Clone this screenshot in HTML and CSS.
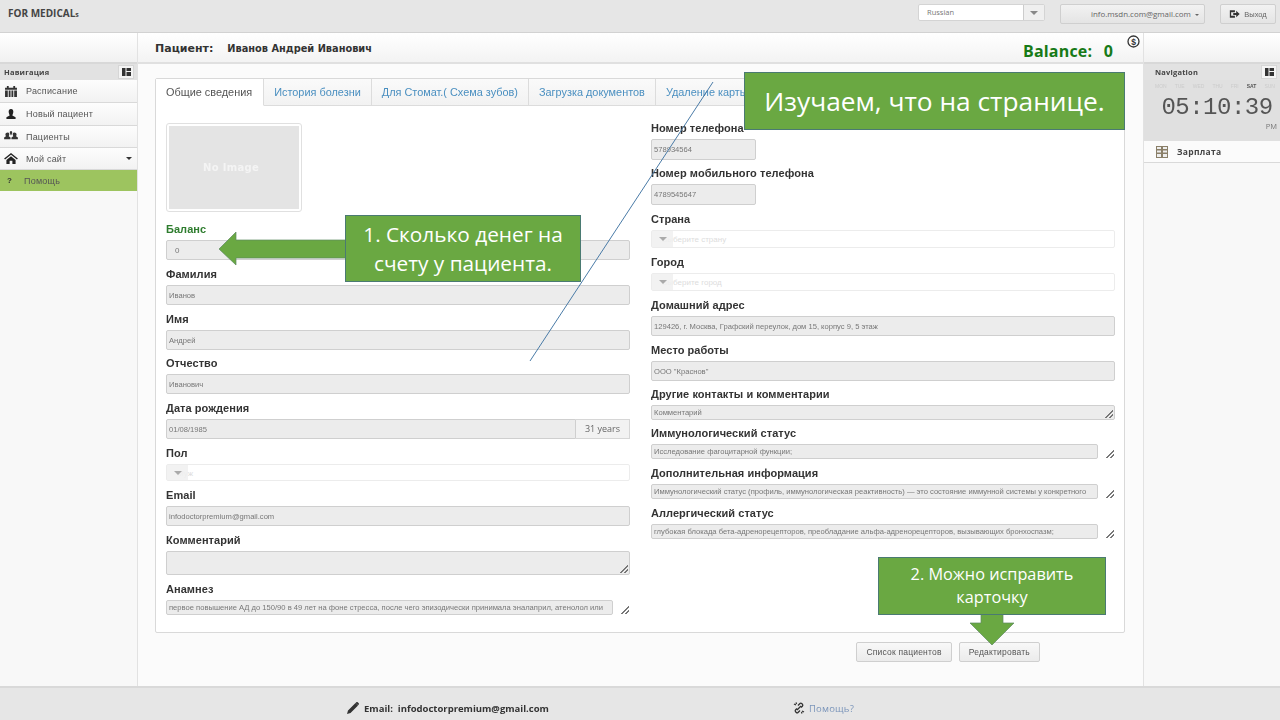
FILE: index.html
```html
<!DOCTYPE html>
<html lang="en">
<head>
    <meta charset="UTF-8">
    <meta name="viewport" content="width=device-width, initial-scale=1.0">
    <title>Пациент</title>
    <link rel="stylesheet" href="styles.css">
</head>
<body>
    <div class="app">
        <header class="topbar">
            <div class="brand">FOR MEDICAL<small>s</small></div>
            <div class="lang">
                <span class="lang-text">Russian</span>
                <span class="lang-caret"><i class="tri"></i></span>
            </div>
            <button class="top-btn account">info.msdn.com@gmail.com <i class="tri tiny"></i></button>
            <button class="top-btn logout">
                <svg width="11" height="10" viewBox="0 0 13 11"><path d="M1 1h6v2.500H2.500v4H7V10H1z" fill="#333"/><path d="M5 4.200h3.500V1.800L12.600 5.500 8.500 9.200V6.800H5z" fill="#333"/></svg>
                Выход
            </button>
        </header>

        <div class="layout">
            <aside class="side">
                <div class="side-top"></div>
                <div class="side-head">
                    <span>Навигация</span>
                    <span class="side-toggle"><svg width="9" height="8" viewBox="0 0 9 8"><path d="M0 0h3.500v8H0zM4.500 0H9v3H4.500zM4.500 4H9v4H4.500z" fill="#333"/></svg></span>
                </div>
                <nav class="menu">
                    <a class="menu-item">
                        <svg width="14" height="11" viewBox="0 0 15 12"><path d="M1 2h13v2H1zM1 5h3v7H1zM5 5h2v7H5zM8 5h2v7H8zM11 5h3v7h-3zM3 0h2v2H3zM10 0h2v2h-2z" fill="#333"/></svg>
                        <span>Расписание</span>
                    </a>
                    <a class="menu-item">
                        <svg width="14" height="11" viewBox="0 0 15 12"><path d="M7.500 0C9.500 0 10.300 1.500 10 3.500 9.800 5 9 6.300 9 7l3.500 2v2h-10V9L6 7c0-.7-.8-2-1-3.500C4.700 1.500 5.500 0 7.500 0z" fill="#222"/></svg>
                        <span>Новый пациент</span>
                    </a>
                    <a class="menu-item">
                        <svg width="14" height="11" viewBox="0 0 15 12"><path d="M4 1.500c1.300 0 1.800 1 1.600 2.200C5.500 4.700 5 5.300 5 5.800L7 7v2H0V7l2-1.200c0-.5-.5-1.100-.6-2.100C1.200 2.500 2.700 1.500 4 1.500zM11 1.500c1.300 0 2.800 1 2.600 2.200-.1 1-.6 1.600-.6 2.100L15 7v2H8V7l2-1.200c0-.5-.5-1.100-.6-2.100C9.200 2.500 9.700 1.500 11 1.500zM7.500 0c1 0 1.400.8 1.300 1.700C8.700 2.500 8.300 3 8.300 3.500L7.500 5 6.700 3.500c0-.5-.4-1-.5-1.800C6.100.8 6.500 0 7.500 0z" fill="#333"/></svg>
                        <span>Пациенты</span>
                    </a>
                    <a class="menu-item">
                        <svg width="14" height="11" viewBox="0 0 15 12"><path d="M7.500 0L15 6l-1 1.200-6.500-5.200L1 7.200 0 6z" fill="#222"/><path d="M2.500 7.500l5-4 5 4V12H9V8.500H6V12H2.500z" fill="#222"/></svg>
                        <span>Мой сайт</span>
                        <i class="tri menu-caret"></i>
                    </a>
                    <a class="menu-item active">
                        <b class="help-mark">?</b>
                        <span>Помощь</span>
                    </a>
                </nav>
            </aside>

            <main class="main">
                <div class="subhead">
                    <div class="patient"><strong>Пациент:</strong><span>Иванов Андрей Иванович</span></div>
                    <div class="balance">Balance: <span>0</span></div>
                    <svg class="coin" width="13" height="13" viewBox="0 0 13 13"><circle cx="6.500" cy="6.500" r="5.500" fill="none" stroke="#333" stroke-width="1.300"/><text x="6.500" y="9.500" text-anchor="middle" class="coin-text">$</text></svg>
                </div>

                <section class="panel">
                    <div class="tabs">
                        <a class="tab current">Общие сведения</a>
                        <a class="tab">История болезни</a>
                        <a class="tab">Для Стомат.( Схема зубов)</a>
                        <a class="tab">Загрузка документов</a>
                        <a class="tab">Удаление карты</a>
                    </div>
                    <div class="columns">
                        <div class="col">
                            <div class="photo"><div class="photo-inner">No Image</div></div>
                            <div class="field first">
                                <label class="green">Баланс</label>
                                <input class="input balance-input" value="0" readonly>
                            </div>
                            <div class="field">
                                <label>Фамилия</label>
                                <input class="input" value="Иванов" readonly>
                            </div>
                            <div class="field tight">
                                <label>Имя</label>
                                <input class="input" value="Андрей" readonly>
                            </div>
                            <div class="field">
                                <label>Отчество</label>
                                <input class="input" value="Иванович" readonly>
                            </div>
                            <div class="field">
                                <label>Дата рождения</label>
                                <div class="input-group">
                                    <input class="input" value="01/08/1985" readonly>
                                    <span class="addon">31 years</span>
                                </div>
                            </div>
                            <div class="field">
                                <label>Пол</label>
                                <div class="pick low"><span>Муж</span><i class="pick-caret"><i class="tri"></i></i></div>
                            </div>
                            <div class="field">
                                <label>Email</label>
                                <input class="input" value="infodoctorpremium@gmail.com" readonly>
                            </div>
                            <div class="field">
                                <label>Комментарий</label>
                                <div class="area tall"></div>
                            </div>
                            <div class="field">
                                <label>Анамнез</label>
                                <div class="area-wrap">
                                    <div class="area">первое повышение АД до 150/90 в 49 лет на фоне стресса, после чего эпизодически принимала эналаприл, атенолол или</div>
                                </div>
                            </div>
                        </div>

                        <div class="col right">
                            <div class="field tight">
                                <label>Номер телефона</label>
                                <input class="input short" value="578934564" readonly>
                            </div>
                            <div class="field">
                                <label>Номер мобильного телефона</label>
                                <input class="input short" value="4789545647" readonly>
                            </div>
                            <div class="field">
                                <label>Страна</label>
                                <div class="pick"><span>Выберите страну</span><i class="pick-caret"><i class="tri"></i></i></div>
                            </div>
                            <div class="field">
                                <label>Город</label>
                                <div class="pick"><span>Выберите город</span><i class="pick-caret"><i class="tri"></i></i></div>
                            </div>
                            <div class="field">
                                <label>Домашний адрес</label>
                                <input class="input" value="129426, г. Москва, Графский переулок, дом 15, корпус 9, 5 этаж" readonly>
                            </div>
                            <div class="field tight">
                                <label>Место работы</label>
                                <input class="input" value="ООО &quot;Краснов&quot;" readonly>
                            </div>
                            <div class="field tight">
                                <label>Другие контакты и комментарии</label>
                                <div class="area">Комментарий</div>
                            </div>
                            <div class="field">
                                <label>Иммунологический статус</label>
                                <div class="area-wrap"><div class="area">Исследование фагоцитарной функции;</div></div>
                            </div>
                            <div class="field">
                                <label>Дополнительная информация</label>
                                <div class="area-wrap"><div class="area">Иммунологический статус (профиль, иммунологическая реактивность) — это состояние иммунной системы у конкретного</div></div>
                            </div>
                            <div class="field">
                                <label>Аллергический статус</label>
                                <div class="area-wrap"><div class="area">глубокая блокада бета-адренорецепторов, преобладание альфа-адренорецепторов, вызывающих бронхоспазм;</div></div>
                            </div>
                        </div>
                    </div>
                </section>

                <div class="actions">
                    <button class="btn">Список пациентов</button>
                    <button class="btn">Редактировать</button>
                </div>
            </main>

            <aside class="side side-right">
                <div class="side-top"></div>
                <div class="side-head">
                    <span>Navigation</span>
                    <span class="side-toggle"><svg width="9" height="8" viewBox="0 0 9 8"><path d="M0 0h3.500v8H0zM4.500 0H9v3H4.500zM4.500 4H9v4H4.500z" fill="#333"/></svg></span>
                </div>
                <div class="clock">
                    <div class="days"><span>MON</span><span>TUE</span><span>WED</span><span>THU</span><span>FRI</span><b>SAT</b><span>SUN</span></div>
                    <div class="time">05:10:39</div>
                    <div class="ampm">PM</div>
                </div>
                <a class="menu-item salary">
                    <svg width="12" height="12" viewBox="0 0 12 12"><path d="M0 0h12v12H0z" fill="#8a7f68"/><path d="M1 1h4v2H1zM7 1h4v2H7zM1 4.500h4v2H1zM7 4.500h4v2H7zM1 8h4v3H1zM7 8h4v3H7z" fill="#eee"/></svg>
                    <span>Зарплата</span>
                </a>
            </aside>
        </div>

        <footer class="footer">
            <div class="foot-mail">
                <svg width="12" height="12" viewBox="0 0 12 12"><path d="M0 12l1-3.500L8.500 1l2.500 2.500L3.500 11zM9.300.3c.5-.4 1-.4 1.400 0l1 1c.4.400.4.900 0 1.300l-.6.600L8.600.900z" fill="#333"/></svg>
                <span>Email:&nbsp; infodoctorpremium@gmail.com</span>
            </div>
            <a class="foot-help">
                <svg width="12" height="12" viewBox="0 0 12 12"><path d="M5 3.500L7 1.500c1-1 3.500 1 2.500 2.500L8 5.500M7 8.500L5 10.500c-1 1-3.500-1-2.500-2.500L4 6.500M4 8l4-4M1 2l2 1M3 .5l.5 1.500M9 11.500L8.500 10M11 10L9 9" fill="none" stroke="#333" stroke-width="1.300"/></svg>
                <span>Помощь?</span>
            </a>
        </footer>
    </div>

    <!-- annotation layer of the slide -->
    <svg class="overlay" width="1280" height="720" viewBox="0 0 1280 720">
        <line x1="713" y1="82" x2="530" y2="361" stroke="#4a7ba7" stroke-width="1"/>
        <path d="M219 249L236 232V240H346V258H236V265Z" fill="#6aa842" stroke="#5b8a60" stroke-width=".7"/>
        <path d="M981 614H1003V623H1014L992 645L970 623H981Z" fill="#6aa842" stroke="#5b8a60" stroke-width=".7"/>
    </svg>
    <div class="note note-top">Изучаем, что на странице.</div>
    <div class="note note-balance">1. Сколько денег на счету у пациента.</div>
    <div class="note note-edit">2. Можно исправить карточку</div>
</body>
</html>
```

FILE: styles.css
```css
* {
    box-sizing: border-box;
}
html, body {
    margin: 0;
    height: 720px;
    overflow: hidden;
}
body {
    font-family: "Liberation Sans", Arial, sans-serif;
    color: #333;
    background: #fafafa;
}
button {
    font-family: inherit;
}
.app {
    height: 720px;
    display: grid;
    grid-template-rows: 33px 1fr 34px;
    filter: blur(.45px);
}

/* top bar */
.topbar {
    display: flex;
    align-items: flex-start;
    padding: 4px 4px 0 8px;
    background: #e6e6e6;
    border-bottom: 1px solid #d2d2d2;
}
.brand {
    margin-right: auto;
    margin-top: 3px;
    font: 700 10px/13px "Open Sans", sans-serif;
    color: #444;
}
.brand small {
    font-size: 7px;
}
.lang {
    width: 127px;
    height: 17px;
    display: flex;
    background: #fff;
    border: 1px solid #d4d4d4;
    border-radius: 2px;
}
.lang-text {
    flex: 1;
    padding-left: 8px;
    font: 7.5px/15px "Open Sans", sans-serif;
    color: #777;
}
.lang-caret {
    width: 21px;
    display: flex;
    align-items: center;
    justify-content: center;
    background: #efefef;
    border-left: 1px solid #ccc;
}
.tri {
    display: inline-block;
    width: 0;
    height: 0;
    border-left: 4px solid transparent;
    border-right: 4px solid transparent;
    border-top: 4px solid #888;
}
.tri.tiny {
    border-width: 2px 2px 0;
    border-top-color: #666;
    vertical-align: middle;
    margin-left: 2px;
}
.top-btn {
    height: 20px;
    padding: 0;
    font-size: 7.5px;
    color: #666;
    background: linear-gradient(#f2f2f2, #e4e4e4);
    border: 1px solid #cfcfcf;
    border-radius: 2px;
}
.account {
    width: 145px;
    margin-left: 15px;
    padding-left: 30px;
    text-align: left;
    font-family: "Open Sans", sans-serif;
    font-size: 7.9px;
}
.logout {
    width: 56px;
    margin-left: 15px;
    display: flex;
    align-items: center;
    justify-content: center;
    gap: 4px;
}

/* layout */
.layout {
    display: grid;
    grid-template-columns: 137px 1fr 136px;
    min-height: 0;
}
.side {
    background: #f8f8f8;
}
.side-top {
    height: 31px;
    background: linear-gradient(#fff, #f1f1f1);
    border-bottom: 2px solid #d8d8d8;
}
.side-head {
    height: 16px;
    display: flex;
    align-items: center;
    justify-content: space-between;
    padding: 0 3px 0 4px;
    font: 700 7.5px/14px "Open Sans", sans-serif;
    letter-spacing: .2px;
    color: #444;
    background: #e2e2e2;
}
.side-right .side-head {
    padding-left: 11px;
}
.side-toggle {
    width: 16px;
    height: 14px;
    display: flex;
    align-items: center;
    justify-content: center;
    background: #f4f4f4;
    border: 1px solid #d6d6d6;
}
.menu-item {
    height: 22px;
    display: flex;
    align-items: center;
    gap: 8px;
    padding-left: 4px;
    font-size: 9px;
    letter-spacing: .2px;
    color: #555;
    background: linear-gradient(#fdfdfd, #f2f2f2);
    border-bottom: 1px solid #d9d9d9;
}
.menu-item:nth-child(-n+2) {
    height: 23px;
}
.menu-item svg {
    flex: none;
}
.menu-caret {
    margin-left: auto;
    margin-right: 5px;
    border-width: 3px 3px 0;
    border-top-color: #333;
}
.menu-item.active {
    height: 21px;
    gap: 12px;
    padding-left: 7px;
    background: #9dc45f;
    border-bottom: 0;
}
.help-mark {
    font-size: 8px;
    color: #333;
}
.main {
    min-width: 0;
    background: #fbfbfb;
    border-left: 1px solid #e2e2e2;
    border-right: 1px solid #e2e2e2;
}
.subhead {
    position: relative;
    height: 31px;
    display: flex;
    align-items: center;
    justify-content: space-between;
    padding: 0 30px 0 17px;
    background: linear-gradient(#fff, #f3f3f3);
    border-bottom: 2px solid #e0e0e0;
}
.patient {
    display: flex;
    gap: 14px;
    align-items: center;
    margin-top: 1px;
    font-family: "DejaVu Sans", sans-serif;
    font-weight: 700;
    font-size: 9.8px;
    color: #333;
}
.patient strong {
    font-size: 11px;
}
.balance {
    margin-top: 6px;
    font: 700 16px/18px "Open Sans", sans-serif;
    letter-spacing: .2px;
    color: #177a17;
}
.balance span {
    margin-left: 7px;
}
.coin {
    position: absolute;
    right: 3px;
    top: 2px;
}
.coin-text {
    font: 700 8.500px "Liberation Sans", sans-serif;
    fill: #333;
}

/* card */
.panel {
    height: 555px;
    margin: 14px 18px 0 17px;
    background: #fff;
    border: 1px solid #d9d9d9;
    border-radius: 2px;
}
.tabs {
    display: flex;
    height: 27px;
    border-bottom: 1px solid #dcdcdc;
}
.tab {
    height: 27px;
    padding: 0 10px;
    font-size: 10.9px;
    line-height: 27px;
    white-space: nowrap;
    color: #4a8fc0;
    background: linear-gradient(#fafafa, #f2f2f2);
    border-right: 1px solid #dcdcdc;
    border-bottom: 1px solid #dcdcdc;
}
.tab.current {
    padding-right: 11px;
    color: #555;
    background: #fff;
    border-bottom-color: #fff;
}
.columns {
    display: grid;
    grid-template-columns: 464px 464px;
    column-gap: 21px;
    padding: 17px 10px 0;
}
.col.right {
    margin-top: -1px;
}
.photo {
    width: 136px;
    height: 89px;
    padding: 2px;
    border: 1px solid #e0e0e0;
    border-radius: 3px;
}
.photo-inner {
    height: 100%;
    display: flex;
    align-items: center;
    justify-content: center;
    padding-right: 6px;
    font: 700 10px "DejaVu Sans", sans-serif;
    letter-spacing: .3px;
    color: #f4f4f4;
    background: #e4e4e4;
}
.field {
    margin-bottom: 8px;
}
.field.tight {
    margin-bottom: 7px;
}
.field.first {
    margin-top: 11px;
}
label {
    display: block;
    height: 14px;
    margin-bottom: 3px;
    font-size: 11px;
    font-weight: 700;
    line-height: 13px;
    letter-spacing: .05px;
    color: #333;
}
label.green {
    color: #2f7d2f;
}
.input {
    display: block;
    width: 100%;
    height: 20px;
    padding: 0 2px;
    font: 7.6px "Liberation Sans", sans-serif;
    color: #777;
    background: #ececec;
    border: 1px solid #cfcfcf;
    border-radius: 2px;
    outline: 0;
}
.input.short {
    width: 105px;
    height: 21px;
}
.balance-input {
    padding-left: 8px;
    font-size: 8px;
}
.input-group {
    display: flex;
}
.input-group .input {
    flex: 1;
    border-radius: 2px 0 0 2px;
}
.addon {
    width: 54px;
    height: 20px;
    font: 9px/18px "Open Sans", sans-serif;
    text-align: center;
    color: #666;
    background: #f2f2f2;
    border: 1px solid #d6d6d6;
    border-left: 0;
}
.pick {
    position: relative;
    height: 18px;
    padding-left: 10px;
    font-size: 8px;
    line-height: 17px;
    color: #ddd;
    background: #fff;
    border: 1px solid #ececec;
    border-radius: 2px;
}
.pick.low {
    height: 17px;
}
.pick-caret {
    position: absolute;
    left: 0;
    top: 0;
    width: 21px;
    height: 100%;
    display: flex;
    align-items: center;
    justify-content: center;
    background: rgba(240, 240, 240, .85);
}
.pick-caret .tri {
    border-top-color: #aaa;
}
.area {
    position: relative;
    height: 15px;
    padding: 0 2px;
    overflow: hidden;
    white-space: nowrap;
    font-size: 7.6px;
    line-height: 13px;
    color: #777;
    background: #ececec;
    border: 1px solid #cfcfcf;
    border-radius: 2px;
}
.area.tall {
    height: 24px;
}
.area::after,
.area-wrap::after {
    content: "";
    position: absolute;
    right: 1px;
    bottom: 1px;
    width: 8px;
    height: 8px;
    background: linear-gradient(135deg, transparent 50%, #777 50%, #777 60%, transparent 60%, transparent 72%, #777 72%, #777 82%, transparent 82%);
}
.area-wrap {
    position: relative;
    padding-right: 17px;
}
.area-wrap .area::after {
    display: none;
}
.actions {
    display: flex;
    justify-content: flex-end;
    gap: 7px;
    margin-top: 9px;
    padding-right: 103px;
}
.btn {
    height: 20px;
    padding: 0 9px;
    font-size: 8.500px;
    letter-spacing: .2px;
    color: #555;
    background: linear-gradient(#f8f8f8, #ebebeb);
    border: 1px solid #cfcfcf;
    border-radius: 2px;
}

/* right column */
.clock {
    height: 61px;
    padding-top: 3px;
    background: #e0e0e0;
    text-align: center;
}
.days {
    display: flex;
    justify-content: space-between;
    padding: 0 5px 0 11px;
    font-size: 5px;
    color: #cbcbcb;
}
.days b {
    color: #555;
}
.time {
    margin-top: 7px;
    padding-left: 10px;
    font: 24px/24px "Liberation Mono", monospace;
    letter-spacing: -.5px;
    color: #555;
}
.ampm {
    padding-right: 3px;
    font: 7.500px/12px "Open Sans", sans-serif;
    text-align: right;
    color: #777;
}
.salary {
    height: 22px;
    gap: 9px;
    padding-left: 12px;
    font: 700 8.5px "Open Sans", sans-serif;
    letter-spacing: .3px;
    color: #444;
    background: #fbfbfb;
}

/* footer */
.footer {
    display: flex;
    align-items: center;
    padding: 8px 0 0 347px;
    font: 700 9.500px "Open Sans", sans-serif;
    color: #333;
    background: #e6e6e6;
    border-top: 2px solid #d9d9d9;
}
.foot-mail {
    display: flex;
    align-items: center;
    gap: 5px;
    width: 446px;
}
.foot-help {
    display: flex;
    align-items: center;
    gap: 4px;
    font-weight: 400;
    letter-spacing: .2px;
    color: #7b95ba;
}

/* annotations */
.overlay {
    position: absolute;
    left: 0;
    top: 0;
}
.note {
    position: absolute;
    display: flex;
    align-items: center;
    justify-content: center;
    text-align: center;
    font-family: "Open Sans", sans-serif;
    color: #fff;
    background: #6aa842;
    border: 1px solid #4a7a72;
}
.note-top {
    left: 744px;
    top: 72px;
    width: 381px;
    height: 58px;
    font-size: 26.3px;
}
.note-balance {
    left: 345px;
    top: 215px;
    width: 236px;
    height: 67px;
    padding: 0 10px;
    font-size: 20.8px;
    line-height: 29px;
}
.note-edit {
    left: 878px;
    top: 557px;
    width: 228px;
    height: 58px;
    padding: 0 30px;
    font-size: 16.3px;
    line-height: 23px;
}
```
